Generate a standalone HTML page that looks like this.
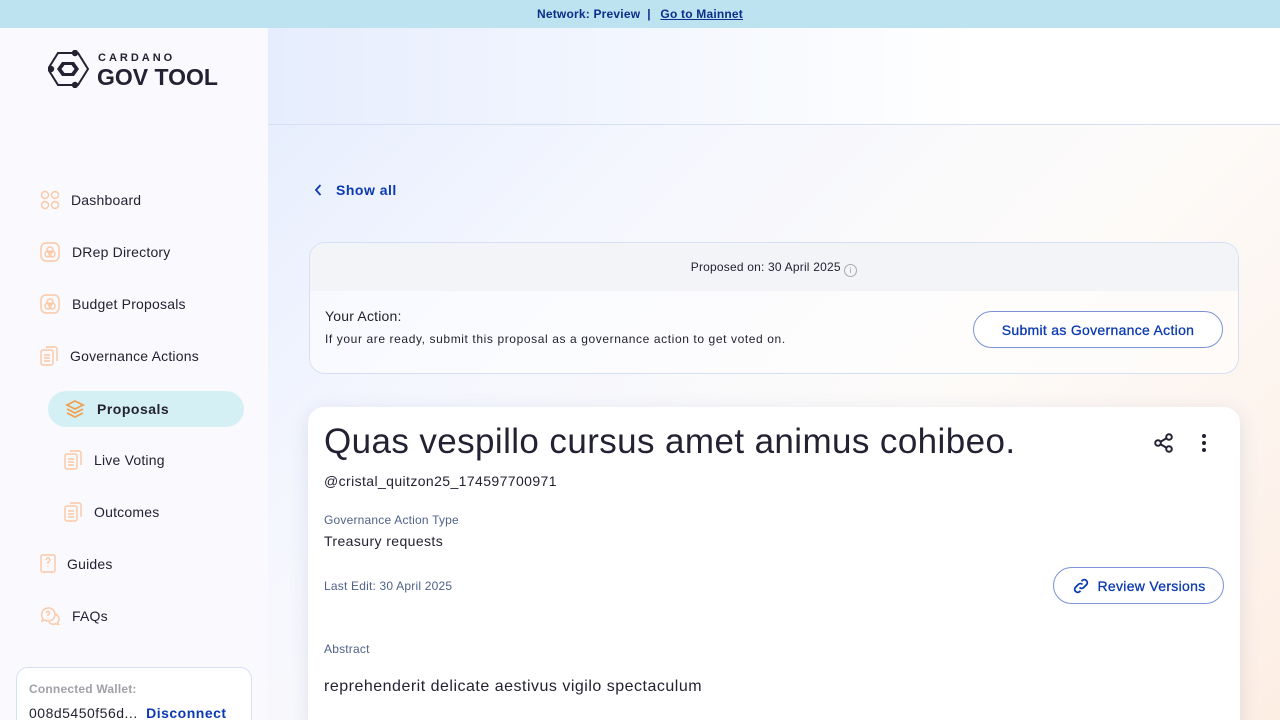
<!DOCTYPE html>
<html><head><meta charset="utf-8"><style>
*{box-sizing:border-box;margin:0;padding:0}
html,body{width:1280px;height:720px;overflow:hidden}
body{font-family:"Liberation Sans",sans-serif;color:#242232;position:relative;background:#fff;letter-spacing:0.2px}
.top{position:absolute;left:0;top:0;width:1280px;height:28px;background:#bee3f0;text-align:center;font-size:12px;font-weight:bold;color:#0b2e8a;line-height:28px}
.top u{margin-left:6px}
.side{position:absolute;left:0;top:28px;width:268px;height:692px;background:#f9f9fe}
.main{position:absolute;left:268px;top:28px;width:1012px;height:692px;overflow:hidden;background:linear-gradient(135deg,#e4ecfd 0%,#f5f7fe 30%,#fdfbf9 60%,#fdeee4 100%)}
.hdr{position:absolute;left:0;top:0;width:1012px;height:97px;border-bottom:1px solid #d6e0f5;background:linear-gradient(90deg,#e6edfd,#fff 70%)}
.nav{position:absolute;left:40px;font-size:14px;display:flex;align-items:center;gap:12px;color:#242232}
.ic{width:20px;height:20px}
.logo{position:absolute;left:48px;top:22px}
.wallet{position:absolute;left:16px;top:639px;width:236px;height:80px;border:1px solid #d6e0f5;border-radius:12px;background:#fff;padding:14px 12px}
.card1{position:absolute;left:41px;top:214px;width:930px;height:132px;border:1px solid #d6e0f5;border-radius:16px;overflow:hidden;background:rgba(255,255,255,.5)}
.card1 .strip{height:48px;background:#f3f4f7;text-align:center;font-size:12px;line-height:48px;color:#242232}
.btn{position:absolute;border:1px solid #7c93d8;border-radius:20px;color:#0b3ab0;font-size:14px;font-weight:bold;background:#fff;display:flex;align-items:center;justify-content:center;gap:8px}
.card2{position:absolute;left:40px;top:379px;width:932px;height:330px;background:#fff;border-radius:16px;box-shadow:0 4px 20px rgba(40,60,120,.12)}
.lbl{position:absolute;left:16px;font-size:12px;color:#506288}
</style></head><body>
<div class="top">Network: Preview &nbsp;| <u>Go to Mainnet</u></div>
<div class="side">
 <div class="logo">
  <svg width="42" height="38" viewBox="0 0 42 38" style="position:absolute;left:0;top:0"><path d="M10 3h20l10 16-10 16H10L0 19z" fill="none" stroke="#242232" stroke-width="2"/><path d="M14 12h12l5 7-5 7H14l-5-7z" fill="#242232"/><path d="M16.5 15h7l3 4-3 4h-7l-3-4z" fill="#f9f9fe"/><circle cx="27" cy="3" r="3.2" fill="#242232"/><circle cx="3" cy="19" r="3.2" fill="#242232"/><circle cx="27" cy="35" r="3.2" fill="#242232"/></svg>
  <div style="position:absolute;left:50px;top:2px;font-size:11px;letter-spacing:3px;font-weight:bold;color:#242232">CARDANO</div>
  <div style="position:absolute;left:49px;top:14px;font-size:23px;font-weight:bold;color:#242232;white-space:nowrap;letter-spacing:0">GOV TOOL</div>
 </div>
 <div class="nav" style="top:162px;gap:11px"><svg class="ic" viewBox="0 0 20 20" fill="none" stroke="#fbc8a4" stroke-width="1.4"><circle cx="5" cy="5" r="3.5"/><circle cx="15" cy="5" r="3.5"/><circle cx="5" cy="15" r="3.5"/><circle cx="15" cy="15" r="3.5"/></svg>Dashboard</div>
 <div class="nav" style="top:214px"><svg class="ic" viewBox="0 0 20 20" fill="none" stroke="#fbc8a4" stroke-width="1.4"><rect x="1" y="1" width="18" height="18" rx="5"/><circle cx="10" cy="8" r="3"/><circle cx="8" cy="12" r="3"/><circle cx="12" cy="12" r="3"/></svg>DRep Directory</div>
 <div class="nav" style="top:266px"><svg class="ic" viewBox="0 0 20 20" fill="none" stroke="#fbc8a4" stroke-width="1.4"><rect x="1" y="1" width="18" height="18" rx="5"/><circle cx="10" cy="8" r="3"/><circle cx="8" cy="12" r="3"/><circle cx="12" cy="12" r="3"/></svg>Budget Proposals</div>
 <div class="nav" style="top:318px;gap:10px"><svg class="ic" viewBox="0 0 20 20" fill="none" stroke="#fbc8a4" stroke-width="1.4"><rect x="1" y="4" width="12" height="15" rx="2"/><path d="M6 1h9a2 2 0 0 1 2 2v12M4 9h6M4 12h6M4 15h6"/></svg>Governance Actions</div>
 <div style="position:absolute;left:48px;top:363px;width:196px;height:36px;border-radius:18px;background:#d5f0f5"></div>
 <div class="nav" style="top:371px;left:65px;gap:12px;font-weight:bold;letter-spacing:0.5px"><svg class="ic" viewBox="0 0 20 20" fill="none" stroke="#f0a050" stroke-width="1.8"><path d="M10 2l8 4-8 4-8-4z M2 10l8 4 8-4 M2 14l8 4 8-4"/></svg>Proposals</div>
 <div class="nav" style="top:422px;left:64px;gap:10px"><svg class="ic" viewBox="0 0 20 20" fill="none" stroke="#fbc8a4" stroke-width="1.4"><rect x="1" y="4" width="12" height="15" rx="2"/><path d="M6 1h9a2 2 0 0 1 2 2v12M4 9h6M4 12h6M4 15h6"/></svg>Live Voting</div>
 <div class="nav" style="top:474px;left:64px;gap:10px"><svg class="ic" viewBox="0 0 20 20" fill="none" stroke="#fbc8a4" stroke-width="1.4"><rect x="1" y="4" width="12" height="15" rx="2"/><path d="M6 1h9a2 2 0 0 1 2 2v12M4 9h6M4 12h6M4 15h6"/></svg>Outcomes</div>
 <div class="nav" style="top:526px;gap:11px"><svg class="ic" style="width:16px" viewBox="0 0 16 20" fill="none" stroke="#fbc8a4" stroke-width="1.4"><rect x="1" y="1" width="14" height="17" rx="1.5"/><path d="M6 6a2 2 0 1 1 2 2v2M8 12v1"/></svg>Guides</div>
 <div class="nav" style="top:578px"><svg class="ic" viewBox="0 0 20 20" fill="none" stroke="#fbc8a4" stroke-width="1.4"><path d="M8 2a6.5 6.5 0 0 0-5 10.5L2 15l3-1A6.5 6.5 0 1 0 8 2z"/><path d="M6.5 7a1.5 1.5 0 1 1 1.5 1.5V10M8 12v.5"/><path d="M14.5 8a5 5 0 0 1 3 8.5l1 2-3-.8A5 5 0 0 1 9 16"/></svg>FAQs</div>
 <div class="wallet">
  <div style="font-size:12px;color:#a0a0a8;font-weight:bold">Connected Wallet:</div>
  <div style="font-size:14px;margin-top:9px;white-space:nowrap;letter-spacing:0.5px">008d5450f56d... <b style="color:#0b3ab0;margin-left:4px">Disconnect</b></div>
 </div>
</div>
<div class="main">
 <div class="hdr"></div>
 <div style="position:absolute;left:46px;top:154px;font-size:14px;font-weight:bold;color:#0b3ab0;display:flex;align-items:center;gap:14px;letter-spacing:0.5px"><svg width="8" height="12" viewBox="0 0 8 12" fill="none" stroke="#0b3ab0" stroke-width="1.8"><path d="M6.5 1 2 6l4.5 5"/></svg>Show all</div>
 <div class="card1">
  <div class="strip">Proposed on: 30 April 2025 <span style="display:inline-block;width:13px;height:13px;border:1px solid #aaa;border-radius:50%;font-size:8px;line-height:11px;color:#999;vertical-align:-2px">i</span></div>
  <div style="position:absolute;left:15px;top:65px;font-size:14px">Your Action:</div>
  <div style="position:absolute;left:15px;top:89px;font-size:12px;letter-spacing:0.6px">If your are ready, submit this proposal as a governance action to get voted on.</div>
  <div class="btn" style="left:663px;top:68px;width:250px;height:37px;font-weight:normal;letter-spacing:0.3px;-webkit-text-stroke:0.3px #0b3ab0">Submit as Governance Action</div>
 </div>
 <div class="card2">
  <div style="position:absolute;left:16px;top:15px;font-size:35px;color:#242232;letter-spacing:0.4px">Quas vespillo cursus amet animus cohibeo.</div>
  <svg style="position:absolute;left:846px;top:26px" width="20" height="20" viewBox="0 0 20 20" fill="none" stroke="#242232" stroke-width="2"><circle cx="4" cy="10" r="2.8"/><circle cx="15" cy="4" r="2.8"/><circle cx="15" cy="16" r="2.8"/><path d="M6.5 8.7 12.5 5.3M6.5 11.3l6 3.4"/></svg>
  <svg style="position:absolute;left:892px;top:26px" width="8" height="20" viewBox="0 0 8 20" fill="#242232"><circle cx="4" cy="3" r="2"/><circle cx="4" cy="10" r="2"/><circle cx="4" cy="17" r="2"/></svg>
  <div style="position:absolute;left:16px;top:66px;font-size:14px;letter-spacing:0.4px">@cristal_quitzon25_174597700971</div>
  <div class="lbl" style="top:106px">Governance Action Type</div>
  <div style="position:absolute;left:16px;top:126px;font-size:14px;letter-spacing:0.4px">Treasury requests</div>
  <div class="lbl" style="top:172px">Last Edit: 30 April 2025</div>
  <div class="btn" style="left:745px;top:160px;width:171px;height:37px;font-weight:normal;letter-spacing:0.3px;-webkit-text-stroke:0.3px #0b3ab0"><svg width="18" height="18" viewBox="0 0 18 18" fill="none" stroke="#0b3ab0" stroke-width="1.8"><path d="M7.5 10.5a3 3 0 0 0 4.2 0l3-3a3 3 0 0 0-4.2-4.2l-1 1M10.5 7.5a3 3 0 0 0-4.2 0l-3 3a3 3 0 0 0 4.2 4.2l1-1"/></svg>Review Versions</div>
  <div class="lbl" style="top:235px">Abstract</div>
  <div style="position:absolute;left:16px;top:271px;font-size:16px;letter-spacing:0.5px">reprehenderit delicate aestivus vigilo spectaculum</div>
 </div>
</div>
</body></html>
